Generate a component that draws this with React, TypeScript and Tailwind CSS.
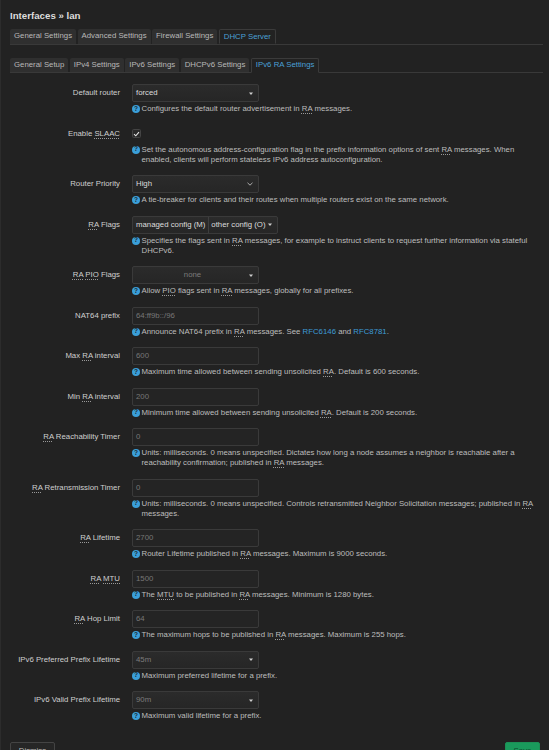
import type { ReactNode } from 'react';

type Tab = { label: string; active?: boolean };

const mainTabs: Tab[] = [
  { label: 'General Settings' },
  { label: 'Advanced Settings' },
  { label: 'Firewall Settings' },
  { label: 'DHCP Server', active: true },
];

const subTabs: Tab[] = [
  { label: 'General Setup' },
  { label: 'IPv4 Settings' },
  { label: 'IPv6 Settings' },
  { label: 'DHCPv6 Settings' },
  { label: 'IPv6 RA Settings', active: true },
];

function Tabs({ tabs }: { tabs: Tab[] }) {
  return (
    <ul className="flex gap-[1.5px] border-b border-[#393939]">
      {tabs.map((t) => (
        <li
          key={t.label}
          className={
            t.active
              ? '-mb-px flex h-[15px] items-center rounded-t-[2px] border border-[#3b3b3b] border-b-[#222222] bg-[#222222] px-[4px] text-[#4aa0d6]'
              : 'flex h-[14.5px] items-center rounded-t-[2px] bg-[#2f2f2f] px-[4px] text-[#b9b9b9]'
          }
        >
          {t.label}
        </li>
      ))}
    </ul>
  );
}

// dotted-underlined abbreviation, like <abbr> in LuCI
function Ab({ children }: { children: ReactNode }) {
  return <span className="underline decoration-dotted decoration-[#999] underline-offset-[1.5px]">{children}</span>;
}

function Help({ children }: { children: ReactNode }) {
  return (
    <div className="mt-[2px] flex max-w-[410px] gap-[1.5px] leading-[10px] text-[#bdbdbd]">
      <span className="mt-[1px] flex h-[8px] w-[8px] shrink-0 items-center justify-center rounded-full bg-[#3a9fd9] text-[6.5px] font-bold leading-none text-[#1c2a33]">
        ?
      </span>
      <p>{children}</p>
    </div>
  );
}

function Caret() {
  return (
    <svg width="4" height="3" viewBox="0 0 4 3" className="shrink-0">
      <path d="M0 0.5 L4 0.5 L2 3 Z" fill="#cfcfcf" />
    </svg>
  );
}

function Chevron() {
  return (
    <svg width="6" height="4" viewBox="0 0 6 4" className="shrink-0">
      <path d="M0.5 0.8 L3 3.2 L5.5 0.8" fill="none" stroke="#bdbdbd" strokeWidth="0.9" />
    </svg>
  );
}

const boxCls =
  'flex h-[18px] w-[127px] items-center rounded-[2px] border border-[#3a3a3a] bg-gradient-to-b from-[#2b2b2b] to-[#262626]';

function Select({ value, muted, center, chevron }: { value: string; muted?: boolean; center?: boolean; chevron?: boolean }) {
  return (
    <div className={boxCls + ' pl-[3px] pr-[5px]'}>
      <span className={(center ? 'flex-1 text-center ' : 'flex-1 ') + (muted ? 'text-[#7c7c7c]' : 'text-[#dcdcdc]')}>
        {value}
      </span>
      {chevron ? <Chevron /> : <Caret />}
    </div>
  );
}

function Input({ placeholder }: { placeholder: string }) {
  return (
    <div className="flex h-[18px] w-[127px] items-center rounded-[2px] border border-[#3a3a3a] bg-[#242424] px-[3px] text-[#777777]">
      {placeholder}
    </div>
  );
}

function Row({ label, children, help }: { label: ReactNode; children: ReactNode; help: ReactNode }) {
  return (
    <div className="grid grid-cols-[110px_1fr] gap-x-[12px]">
      <div className="flex h-[18px] items-center justify-end whitespace-nowrap text-right text-[#cfcfcf]">
        <span>{label}</span>
      </div>
      <div>
        {children}
        <Help>{help}</Help>
      </div>
    </div>
  );
}

export default function App() {
  return (
    <div className="min-h-screen overflow-hidden border-l border-[#2c2c2c] bg-[#222222] font-['Liberation_Sans',Arial,sans-serif] text-[7.8px] text-[#cccccc]">
      <div className="pl-[9px] pr-[6px] pt-[10px]">
        <h2 className="text-[9.7px] font-bold leading-[12px] text-[#dddddd]">Interfaces » lan</h2>

        <div className="mt-[7px]">
          <Tabs tabs={mainTabs} />
        </div>
        <div className="mt-[13px]">
          <Tabs tabs={subTabs} />
        </div>

        <div className="mt-[11px] flex flex-col gap-[10.5px]">
          <Row label="Default router" help={<>Configures the default router advertisement in <Ab>RA</Ab> messages.</>}>
            <Select value="forced" />
          </Row>

          <Row
            label={<>Enable <Ab>SLAAC</Ab></>}
            help={
              <>
                Set the autonomous address-configuration flag in the prefix information options of sent <Ab>RA</Ab>{' '}
                messages. When enabled, clients will perform stateless IPv6 address autoconfiguration.
              </>
            }
          >
            <div className="flex h-[18px] items-center">
              <span className="flex h-[9px] w-[9px] items-center justify-center rounded-[1.5px] border border-[#444] bg-[#2a2a2a]">
                <svg width="7" height="6" viewBox="0 0 7 6">
                  <path d="M1 3.2 L2.8 4.8 L6 1.2" fill="none" stroke="#e6e6e6" strokeWidth="1.1" />
                </svg>
              </span>
            </div>
          </Row>

          <Row label="Router Priority" help="A tie-breaker for clients and their routes when multiple routers exist on the same network.">
            <Select value="High" chevron />
          </Row>

          <Row
            label={<><Ab>RA</Ab> Flags</>}
            help={
              <>
                Specifies the flags sent in <Ab>RA</Ab> messages, for example to instruct clients to request further
                information via stateful DHCPv6.
              </>
            }
          >
            <div className="flex h-[18px] w-[146px] items-center rounded-[2px] border border-[#3a3a3a] bg-gradient-to-b from-[#2b2b2b] to-[#262626] pr-[5px] text-[#dcdcdc]">
              <span className="flex h-full items-center border-r border-[#3e3e3e] px-[3px]">managed config (M)</span>
              <span className="flex-1 pl-[2px]">other config (O)</span>
              <Caret />
            </div>
          </Row>

          <Row label={<><Ab>RA</Ab> <Ab>PIO</Ab> Flags</>} help={<>Allow <Ab>PIO</Ab> flags sent in <Ab>RA</Ab> messages, globally for all prefixes.</>}>
            <Select value="none" muted center />
          </Row>

          <Row
            label="NAT64 prefix"
            help={
              <>
                Announce NAT64 prefix in <Ab>RA</Ab> messages. See <span className="text-[#3d9bd6]">RFC6146</span> and{' '}
                <span className="text-[#3d9bd6]">RFC8781</span>.
              </>
            }
          >
            <Input placeholder="64:ff9b::/96" />
          </Row>

          <Row label={<>Max <Ab>RA</Ab> interval</>} help={<>Maximum time allowed between sending unsolicited <Ab>RA</Ab>. Default is 600 seconds.</>}>
            <Input placeholder="600" />
          </Row>

          <Row label={<>Min <Ab>RA</Ab> interval</>} help={<>Minimum time allowed between sending unsolicited <Ab>RA</Ab>. Default is 200 seconds.</>}>
            <Input placeholder="200" />
          </Row>

          <Row
            label={<><Ab>RA</Ab> Reachability Timer</>}
            help={
              <>
                Units: milliseconds. 0 means unspecified. Dictates how long a node assumes a neighbor is reachable after a
                reachability confirmation; published in <Ab>RA</Ab> messages.
              </>
            }
          >
            <Input placeholder="0" />
          </Row>

          <Row
            label={<><Ab>RA</Ab> Retransmission Timer</>}
            help={
              <>
                Units: milliseconds. 0 means unspecified. Controls retransmitted Neighbor Solicitation messages; published in{' '}
                <Ab>RA</Ab> messages.
              </>
            }
          >
            <Input placeholder="0" />
          </Row>

          <Row label={<><Ab>RA</Ab> Lifetime</>} help={<>Router Lifetime published in <Ab>RA</Ab> messages. Maximum is 9000 seconds.</>}>
            <Input placeholder="2700" />
          </Row>

          <Row label={<><Ab>RA</Ab> <Ab>MTU</Ab></>} help={<>The <Ab>MTU</Ab> to be published in <Ab>RA</Ab> messages. Minimum is 1280 bytes.</>}>
            <Input placeholder="1500" />
          </Row>

          <Row label={<><Ab>RA</Ab> Hop Limit</>} help={<>The maximum hops to be published in <Ab>RA</Ab> messages. Maximum is 255 hops.</>}>
            <Input placeholder="64" />
          </Row>

          <Row label="IPv6 Preferred Prefix Lifetime" help="Maximum preferred lifetime for a prefix.">
            <Select value="45m" muted />
          </Row>

          <Row label="IPv6 Valid Prefix Lifetime" help="Maximum valid lifetime for a prefix.">
            <Select value="90m" muted />
          </Row>
        </div>

        <div className="mt-[21px] flex justify-between pr-[3px]">
          <button className="h-[18px] w-[45px] rounded-[2px] border border-[#444] bg-[#262626] text-[#bbbbbb]">Dismiss</button>
          <button className="h-[18px] w-[35px] rounded-[2px] border border-[#1c8f55] bg-[#1a9a5c] text-[#0f4a2e]">Save</button>
        </div>
      </div>
    </div>
  );
}
